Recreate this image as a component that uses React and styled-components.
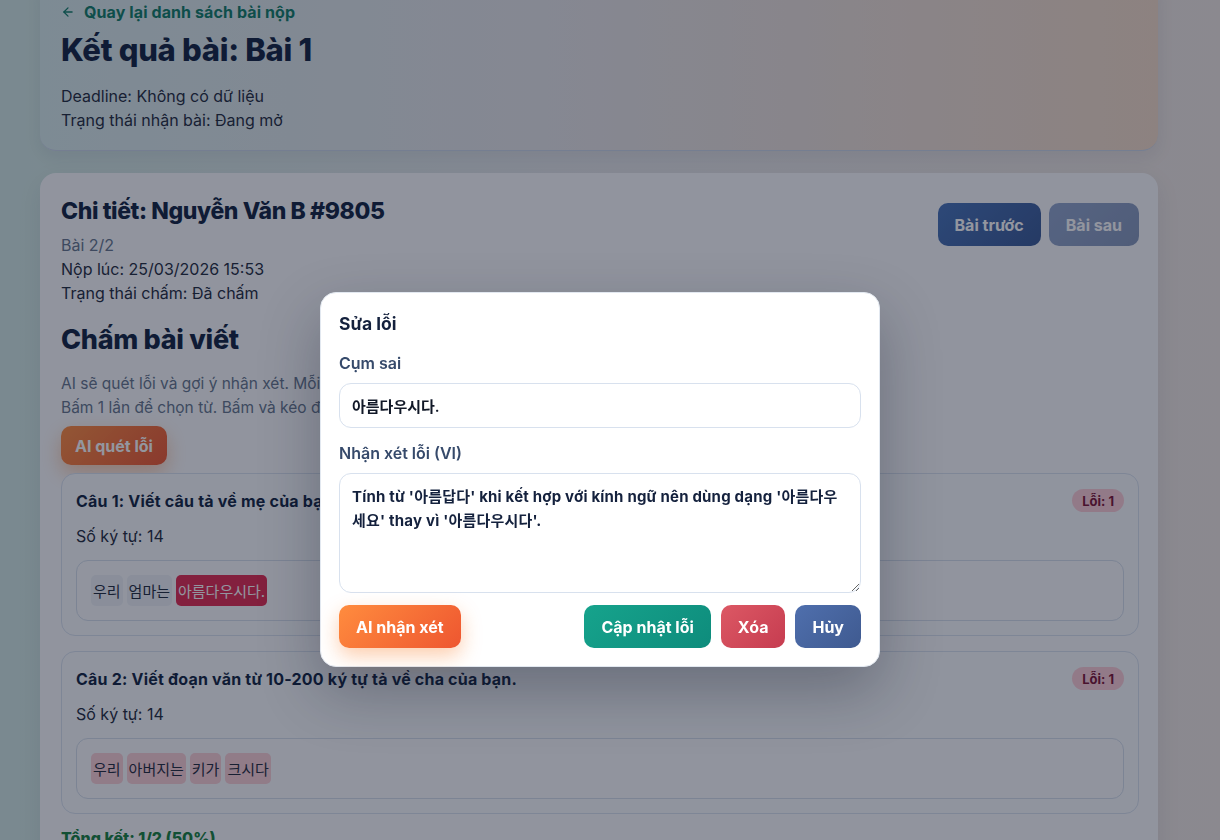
import React from "react";
import styled, { createGlobalStyle } from "styled-components";

const GlobalStyle = createGlobalStyle`
  * { box-sizing: border-box; }
  html, body { margin: 0; padding: 0; }
  body {
    font-family: Inter, "Noto Sans", "Noto Sans CJK KR", sans-serif;
    color: #1e293b;
    background: linear-gradient(90deg, #d1e8e3 0%, #e6e8ea 45%, #f0e7e2 100%);
    min-height: 100vh;
    overflow: hidden;
  }
`;

const Page = styled.div`
  margin-top: -16px;
  padding: 0 62px 40px 40px;
  display: flex;
  flex-direction: column;
  gap: 22px;
`;

const HeroCard = styled.section`
  border-radius: 0 0 16px 16px;
  padding: 18px 20px 18px 21px;
  background: linear-gradient(90deg, #d8ebec 0%, #e6e5e8 45%, #f4dbc7 100%);
  box-shadow: 0 6px 18px rgba(30, 41, 59, 0.08);
  border-bottom: 1px solid #c9d4e6;
`;

const BackLink = styled.a`
  display: flex;
  align-items: center;
  gap: 9px;
  font-size: 16px;
  line-height: 20px;
  font-weight: 700;
  color: #0e7c66;
  text-decoration: none;
  letter-spacing: 0.1px;
`;

const PageTitle = styled.h1`
  margin: 8px 0 0;
  font-size: 31px;
  line-height: 40px;
  font-weight: 800;
  color: #0f1f3f;
  letter-spacing: -0.3px;
`;

const InfoLine = styled.div`
  font-size: 16px;
  line-height: 24px;
  color: ${(p) => (p.$muted ? "#64748b" : "#1e293b")};
`;

const InfoBlock = styled.div`
  margin-top: ${(p) => p.$top || 0}px;
`;

const MainCard = styled.section`
  background: #fbfcfe;
  border-radius: 16px;
  padding: 22px 19px 20px 21px;
  box-shadow: 0 8px 24px rgba(30, 41, 59, 0.08);
`;

const HeaderRow = styled.div`
  display: flex;
  justify-content: space-between;
  align-items: flex-start;
`;

const CardTitle = styled.h2`
  margin: 0 0 6px;
  font-size: 23px;
  line-height: 32px;
  font-weight: 800;
  color: #0f1f3f;
  letter-spacing: -0.4px;
`;

const NavButtons = styled.div`
  display: flex;
  gap: 8px;
  margin-top: 8px;
`;

const Button = styled.button`
  border: none;
  font-family: inherit;
  font-weight: 700;
  font-size: 16px;
  color: #fff;
  height: ${(p) => p.$h || 43}px;
  padding: 0 ${(p) => p.$px || 17}px;
  border-radius: ${(p) => p.$r || 10}px;
  cursor: pointer;
  background: ${(p) => ({
    orange: "linear-gradient(135deg, #ff8c3e 0%, #ee5630 100%)",
    teal: "linear-gradient(135deg, #16a38c 0%, #0e8c7c 100%)",
    red: "linear-gradient(135deg, #dc5864 0%, #c63c50 100%)",
    blue: "linear-gradient(135deg, #4f6fad 0%, #3f5a90 100%)",
    navy: "linear-gradient(135deg, #4672b8 0%, #385894 100%)",
  }[p.$tone])};
  opacity: ${(p) => (p.$disabled ? 0.62 : 1)};
  box-shadow: ${(p) => (p.$glow ? "0 8px 20px rgba(249, 115, 22, 0.35)" : "none")};
`;

const SectionTitle = styled.h2`
  margin: 17px 0 0;
  font-size: 27px;
  line-height: 36px;
  font-weight: 800;
  color: #0f1f3f;
  letter-spacing: -0.3px;
`;

const Description = styled.p`
  margin: 14px 0 0;
  font-size: 15.5px;
  line-height: 24px;
  color: #64748b;
`;

const ScanRow = styled.div`
  margin-top: 6px;
`;

const QuestionList = styled.div`
  margin-top: 8px;
  display: flex;
  flex-direction: column;
  gap: 15px;
`;

const QuestionCard = styled.div`
  border: 1px solid #d9e2ef;
  border-radius: 14px;
  background: #f9fbfd;
  padding: 15px 14px 14px 14px;
`;

const QuestionHead = styled.div`
  display: flex;
  justify-content: space-between;
  align-items: center;
`;

const QuestionTitle = styled.div`
  font-size: 16px;
  line-height: 22px;
  font-weight: 700;
  color: #0f1f3f;
  letter-spacing: 0.2px;
`;

const Badge = styled.span`
  display: inline-flex;
  align-items: center;
  height: 23px;
  padding: 0 10px;
  border-radius: 999px;
  background: #fecdd6;
  color: #7a1233;
  font-size: 13px;
  font-weight: 700;
`;

const CharCount = styled.div`
  margin-top: 12px;
  font-size: 16px;
  line-height: 24px;
  color: #1e293b;
`;

const AnswerBox = styled.div`
  margin-top: 12px;
  border: 1px solid #d5deeb;
  border-radius: 12px;
  background: #fbfcfe;
  padding: 14px;
  display: flex;
  flex-wrap: wrap;
  gap: 4px;
`;

const Chip = styled.span`
  display: inline-flex;
  align-items: center;
  height: 31px;
  padding: 0 2px;
  border-radius: 5px;
  font-size: 15px;
  color: ${(p) => (p.$kind === "error" ? "#fff" : "#1e293b")};
  background: ${(p) => ({
    plain: "#eef1f6",
    error: "#e2294f",
    soft: "#fccfd6",
  }[p.$kind])};
`;

const Summary = styled.div`
  margin-top: 14px;
  font-size: 16px;
  font-weight: 800;
  color: #15803d;
`;

const Overlay = styled.div`
  position: fixed;
  inset: 0;
  background: rgba(15, 23, 42, 0.45);
`;

const Modal = styled.div`
  position: fixed;
  left: 320px;
  top: 292px;
  width: 560px;
  background: #fff;
  border-radius: 16px;
  border: 1px solid #e2e8f0;
  padding: 19px 18px 18px 18px;
  box-shadow: 0 24px 60px rgba(15, 23, 42, 0.3);
`;

const ModalTitle = styled.h3`
  margin: 0;
  font-size: 17.5px;
  line-height: 24px;
  font-weight: 700;
  color: #14213d;
`;

const Label = styled.label`
  display: block;
  margin-top: ${(p) => p.$top}px;
  font-size: 16px;
  line-height: 22px;
  font-weight: 600;
  color: #364a6b;
`;

const TextInput = styled.input`
  display: block;
  width: 100%;
  margin-top: 9px;
  height: 45px;
  border: 1px solid #d8e1ee;
  border-radius: 12px;
  padding: 0 12px;
  font-family: inherit;
  font-size: 15px;
  font-weight: 600;
  color: #111827;
  outline: none;
`;

const TextArea = styled.textarea`
  display: block;
  width: 100%;
  margin-top: 9px;
  height: 120px;
  border: 1px solid #d8e1ee;
  border-radius: 12px;
  padding: 11px 12px;
  font-family: inherit;
  font-size: 15px;
  line-height: 24px;
  font-weight: 700;
  letter-spacing: 0.2px;
  color: #14213d;
  outline: none;
  resize: vertical;
`;

const ModalActions = styled.div`
  margin-top: 12px;
  display: flex;
  align-items: center;
  gap: 10px;
`;

const Spacer = styled.div`
  flex: 1;
`;

const ArrowLeft = () => (
  <svg width="14" height="14" viewBox="0 0 24 24" fill="none" stroke="currentColor" strokeWidth="2.2" strokeLinecap="round" strokeLinejoin="round">
    <path d="M19 12H5" />
    <path d="M12 19l-7-7 7-7" />
  </svg>
);

const questions = [
  {
    title: "Câu 1: Viết câu tả về mẹ của bạn.",
    words: [
      { t: "우리", k: "plain" },
      { t: "엄마는", k: "plain" },
      { t: "아름다우시다.", k: "error" },
    ],
  },
  {
    title: "Câu 2: Viết đoạn văn từ 10-200 ký tự tả về cha của bạn.",
    words: [
      { t: "우리", k: "soft" },
      { t: "아버지는", k: "soft" },
      { t: "키가", k: "soft" },
      { t: "크시다", k: "soft" },
    ],
  },
];

export default function App() {
  return (
    <>
      <GlobalStyle />
      <Page>
        <HeroCard>
          <BackLink href="#">
            <ArrowLeft />
            Quay lại danh sách bài nộp
          </BackLink>
          <PageTitle>Kết quả bài: Bài 1</PageTitle>
          <InfoBlock $top={14}>
            <InfoLine>Deadline: Không có dữ liệu</InfoLine>
            <InfoLine>Trạng thái nhận bài: Đang mở</InfoLine>
          </InfoBlock>
        </HeroCard>

        <MainCard>
          <HeaderRow>
            <div>
              <CardTitle>Chi tiết: Nguyễn Văn B #9805</CardTitle>
              <InfoLine $muted>Bài 2/2</InfoLine>
              <InfoLine>Nộp lúc: 25/03/2026 15:53</InfoLine>
              <InfoLine>Trạng thái chấm: Đã chấm</InfoLine>
            </div>
            <NavButtons>
              <Button $tone="navy">Bài trước</Button>
              <Button $tone="blue" $disabled>Bài sau</Button>
            </NavButtons>
          </HeaderRow>

          <SectionTitle>Chấm bài viết</SectionTitle>
          <Description>
            AI sẽ quét lỗi và gợi ý nhận xét. Mỗi lỗi có thể chỉnh sửa trước khi lưu.
            <br />
            Bấm 1 lần để chọn từ. Bấm và kéo để chọn cụm từ.
          </Description>
          <ScanRow>
            <Button $tone="orange" $h={39} $px={14} $glow>AI quét lỗi</Button>
          </ScanRow>

          <QuestionList>
            {questions.map((q) => (
              <QuestionCard key={q.title}>
                <QuestionHead>
                  <QuestionTitle>{q.title}</QuestionTitle>
                  <Badge>Lỗi: 1</Badge>
                </QuestionHead>
                <CharCount>Số ký tự: 14</CharCount>
                <AnswerBox>
                  {q.words.map((w, i) => (
                    <Chip key={i} $kind={w.k}>{w.t}</Chip>
                  ))}
                </AnswerBox>
              </QuestionCard>
            ))}
          </QuestionList>
          <Summary>Tổng kết: 1/2 (50%)</Summary>
        </MainCard>
      </Page>

      <Overlay />
      <Modal>
        <ModalTitle>Sửa lỗi</ModalTitle>
        <Label $top={16}>Cụm sai</Label>
        <TextInput defaultValue="아름다우시다." />
        <Label $top={14}>Nhận xét lỗi (VI)</Label>
        <TextArea defaultValue={"Tính từ '아름답다' khi kết hợp với kính ngữ nên dùng dạng '아름다우세요' thay vì '아름다우시다'."} />
        <ModalActions>
          <Button $tone="orange" $glow>AI nhận xét</Button>
          <Spacer />
          <Button $tone="teal">Cập nhật lỗi</Button>
          <Button $tone="red">Xóa</Button>
          <Button $tone="blue">Hủy</Button>
        </ModalActions>
      </Modal>
    </>
  );
}
